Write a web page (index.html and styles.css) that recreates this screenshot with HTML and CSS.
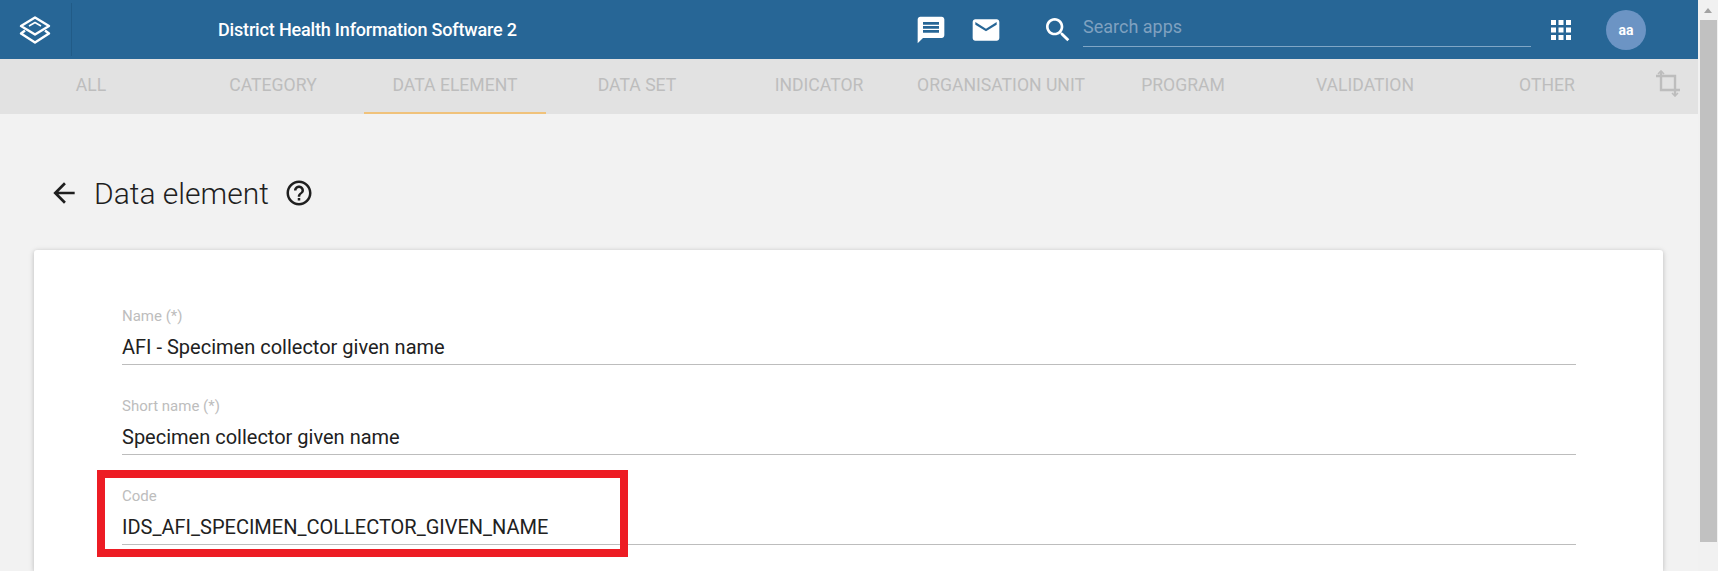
FILE: index.html

```html
<!DOCTYPE html>
<html>
<head>
    <title>Data element - Maintenance</title>
    <meta charset="utf-8">
    <link rel="stylesheet" href="styles.css">
</head>
<body>
    <div class="page">
        <div class="content">
            <header class="top-bar">
                <div class="logo-box">
                    <svg class="logo" viewBox="0 0 32 28" fill="none" stroke="#fff" stroke-width="2.4" stroke-linejoin="round">
                        <path d="M16 1.5 L30 10 L16 18.5 L2 10 Z"/>
                        <path d="M6 14.5 L2 17.5 L16 26.5 L30 17.5 L26 14.5"/>
                        <path d="M10 10 L16 6.5 L22 10" stroke-width="1.6"/>
                    </svg>
                </div>
                <div class="app-title">District Health Information Software 2</div>
                <svg class="icon icon-chat" viewBox="0 0 24 24" fill="#fff"><path d="M20 2H4c-1.1 0-1.99.9-1.99 2L2 22l4-4h14c1.1 0 2-.9 2-2V4c0-1.1-.9-2-2-2zm-2 12H6v-2h12v2zm0-3H6V9h12v2zm0-3H6V6h12v2z"/></svg>
                <svg class="icon icon-mail" viewBox="0 0 24 24" fill="#fff"><path d="M20 4H4c-1.1 0-1.99.9-1.99 2L2 18c0 1.1.9 2 2 2h16c1.1 0 2-.9 2-2V6c0-1.1-.9-2-2-2zm0 4l-8 5-8-5V6l8 5 8-5v2z"/></svg>
                <svg class="icon icon-search" viewBox="0 0 24 24" fill="#fff"><path d="M15.5 14h-.79l-.28-.27C15.41 12.59 16 11.11 16 9.5 16 5.91 13.09 3 9.5 3S3 5.91 3 9.5 5.91 16 9.5 16c1.61 0 3.09-.59 4.23-1.57l.27.28v.79l5 4.99L20.49 19l-4.99-5zm-6 0C7.01 14 5 11.99 5 9.5S7.01 5 9.5 5 14 7.01 14 9.5 11.99 14 9.5 14z"/></svg>
                <div class="search-field">Search apps</div>
                <svg class="icon-apps" viewBox="0 0 20 20" fill="#fff">
                    <rect x="0" y="0" width="5" height="5"/><rect x="7.5" y="0" width="5" height="5"/><rect x="15" y="0" width="5" height="5"/>
                    <rect x="0" y="7.5" width="5" height="5"/><rect x="7.5" y="7.5" width="5" height="5"/><rect x="15" y="7.5" width="5" height="5"/>
                    <rect x="0" y="15" width="5" height="5"/><rect x="7.5" y="15" width="5" height="5"/><rect x="15" y="15" width="5" height="5"/>
                </svg>
                <div class="avatar">aa</div>
            </header>

            <nav class="tabs">
                <div class="tab">All</div>
                <div class="tab">Category</div>
                <div class="tab tab-active">Data element</div>
                <div class="tab">Data set</div>
                <div class="tab">Indicator</div>
                <div class="tab">Organisation unit</div>
                <div class="tab">Program</div>
                <div class="tab">Validation</div>
                <div class="tab">Other</div>
                <div class="tab-crop">
                    <svg class="icon-crop" viewBox="0 0 26 27" fill="none" stroke="#bdbdbd" stroke-width="2.4">
                        <path d="M6 1 V20 H25"/>
                        <path d="M1 6 H20 V25"/>
                        <path d="M3 4 L6 1 L9 4" stroke-width="1.6"/>
                        <path d="M17 23 L20 26 L23 23" stroke-width="1.6"/>
                    </svg>
                </div>
            </nav>

            <main class="main">
                <div class="heading">
                    <svg class="icon-back" viewBox="0 0 24 24" fill="#1f1f1f"><path d="M20 11H7.83l5.59-5.59L12 4l-8 8 8 8 1.41-1.41L7.83 13H20v-2z"/></svg>
                    <h1>Data element</h1>
                    <svg class="icon-help" viewBox="0 0 24 24" fill="#1f1f1f"><path d="M11 18h2v-2h-2v2zm1-16C6.48 2 2 6.48 2 12s4.48 10 10 10 10-4.48 10-10S17.52 2 12 2zm0 18c-4.41 0-8-3.59-8-8s3.59-8 8-8 8 3.59 8 8-3.59 8-8 8zm0-14c-2.21 0-4 1.79-4 4h2c0-1.1.9-2 2-2s2 .9 2 2c0 2-3 1.75-3 5h2c0-2.25 3-2.5 3-5 0-2.21-1.79-4-4-4z"/></svg>
                </div>
                <div class="card">
                    <div class="field">
                        <label>Name (*)</label>
                        <div class="value">AFI - Specimen collector given name</div>
                    </div>
                    <div class="field">
                        <label>Short name (*)</label>
                        <div class="value">Specimen collector given name</div>
                    </div>
                    <div class="field">
                        <label>Code</label>
                        <div class="value">IDS_AFI_SPECIMEN_COLLECTOR_GIVEN_NAME</div>
                        <div class="highlight"></div>
                    </div>
                </div>
            </main>
        </div>
        <div class="scrollbar">
            <div class="scroll-up"></div>
            <div class="scroll-thumb"></div>
        </div>
    </div>
</body>
</html>
```

FILE: styles.css

```css
body {
    margin: 0;
    font-family: Roboto, sans-serif;
    background: #f2f2f2;
}
.page {
    display: flex;
    height: 571px;
    overflow: hidden;
}
.content {
    flex: 1;
    min-width: 0;
}
.top-bar {
    display: flex;
    align-items: center;
    height: 59px;
    background: #276696;
}
.logo-box {
    display: flex;
    align-items: center;
    flex: none;
    width: 72px;
    height: 53px;
    box-sizing: border-box;
    padding-left: 19px;
    border-right: 1px solid #215b87;
}
.logo {
    width: 32px;
    height: 28px;
}
.app-title {
    width: 300px;
    margin-left: 146px;
    color: #fff;
    font-size: 18px;
    font-weight: 500;
    letter-spacing: -0.17px;
    white-space: nowrap;
}
.icon {
    width: 32px;
    height: 32px;
    flex: none;
}
.icon-chat {
    margin-left: 397px;
}
.icon-mail {
    margin-left: 23px;
}
.icon-search {
    margin-left: 40px;
}
.search-field {
    width: 448px;
    margin-left: 9px;
    padding-bottom: 6px;
    border-bottom: 1px solid #7fa6c6;
    color: #7fa1c0;
    font-size: 18px;
    line-height: 27px;
}
.icon-apps {
    width: 20px;
    height: 20px;
    margin-left: 20px;
}
.avatar {
    width: 40px;
    height: 40px;
    margin-left: 35px;
    border-radius: 50%;
    background: #6c94c4;
    color: #fff;
    font-size: 14px;
    font-weight: 700;
    line-height: 40px;
    text-align: center;
}
.tabs {
    display: flex;
    height: 55px;
    background: #e2e2e2;
}
.tab {
    flex: 1;
    box-sizing: border-box;
    color: #bdbdbd;
    font-size: 17.6px;
    line-height: 52px;
    text-align: center;
    text-transform: uppercase;
    white-space: nowrap;
}
.tab-active {
    border-bottom: 2px solid #f0c27b;
}
.tab-crop {
    display: flex;
    justify-content: center;
    align-items: center;
    flex: none;
    width: 60px;
}
.icon-crop {
    width: 26px;
    height: 27px;
    margin-bottom: 6px;
}
.main {
    padding: 59px 35px 0 34px;
}
.heading {
    display: flex;
    align-items: center;
    height: 40px;
    margin-left: 14px;
}
.icon-back {
    width: 32px;
    height: 32px;
}
.heading h1 {
    margin: 0 0 0 14px;
    color: #1f1f1f;
    font-size: 30px;
    font-weight: 300;
}
.icon-help {
    width: 30px;
    height: 30px;
    margin-left: 15px;
}
.card {
    height: 267px;
    margin-top: 37px;
    padding: 54px 87px 0 88px;
    background: #fff;
    border-radius: 3px 3px 0 0;
    box-shadow: 0 1px 6px rgba(0, 0, 0, 0.12), 0 1px 4px rgba(0, 0, 0, 0.12);
}
.field {
    position: relative;
    height: 60px;
    margin-bottom: 29px;
    border-bottom: 1px solid #bdbdbd;
}
.field label {
    display: block;
    height: 24px;
    color: #bdbdbd;
    font-size: 15px;
    line-height: 24px;
}
.value {
    color: #212121;
    font-size: 20px;
    line-height: 38px;
    white-space: nowrap;
}
.highlight {
    position: absolute;
    left: -25px;
    top: -14px;
    width: 531px;
    height: 87px;
    box-sizing: border-box;
    border: 8px solid #ed1c24;
}
.scrollbar {
    flex: none;
    width: 20px;
    background: #f1f1f1;
}
.scroll-up {
    width: 0;
    height: 0;
    margin: 8px 0 0 6px;
    border: 4.5px solid transparent;
    border-top: 0;
    border-bottom: 5px solid #a3a3a3;
}
.scroll-thumb {
    width: 17px;
    height: 522px;
    margin: 7px 0 0 2px;
    background: #c1c1c1;
}
```
